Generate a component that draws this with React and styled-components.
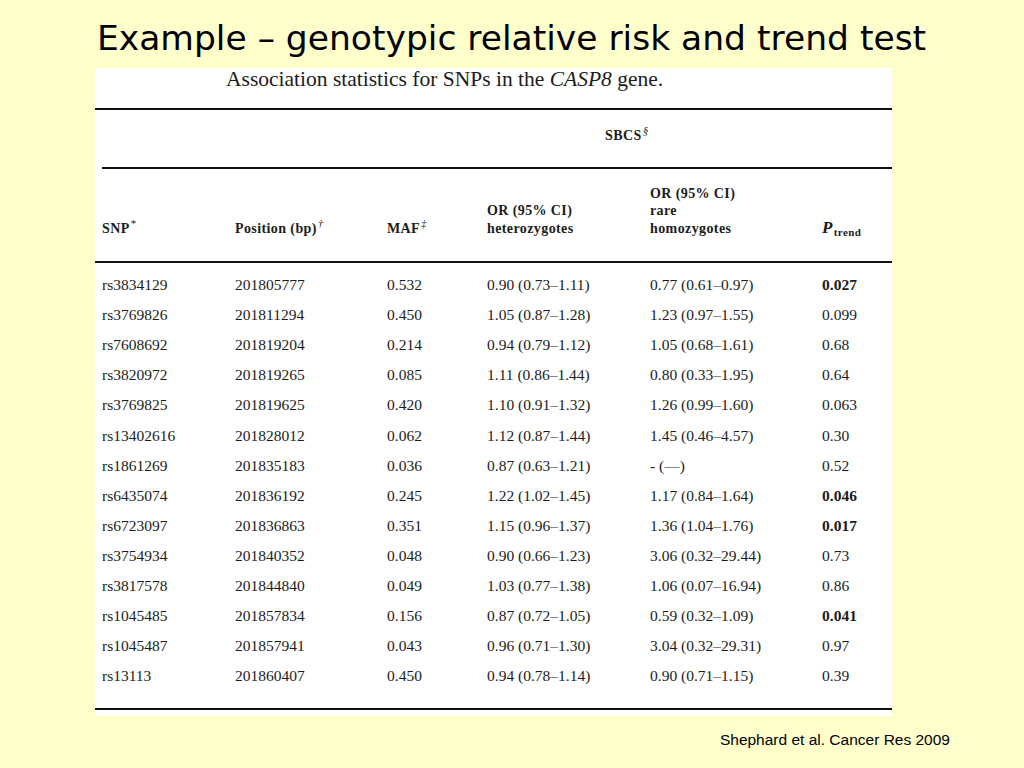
import React from "react";
import styled, { createGlobalStyle } from "styled-components";

const Global = createGlobalStyle`
  html, body { margin: 0; padding: 0; background: #ffffcc; }
  #root { width: 1024px; height: 768px; }
`;

const Page = styled.div`
  width: 1024px;
  height: 768px;
  background: #ffffcc;
  display: flex;
  flex-direction: column;
  box-sizing: border-box;
  padding-top: 16px;
`;

const Title = styled.h1`
  margin: 0 0 0 97px;
  height: 52px;
  font-family: "DejaVu Sans", Verdana, sans-serif;
  font-weight: normal;
  font-size: 34.5px;
  line-height: 44px;
  color: #000;
  white-space: nowrap;
`;

const Panel = styled.div`
  margin-left: 95px;
  width: 797px;
  height: 648px;
  background: #fff;
  display: flex;
  flex-direction: column;
  font-family: "Liberation Serif", "Times New Roman", serif;
  color: #1c1c1c;
`;

const Caption = styled.div`
  height: 40px;
  padding-left: 131px;
  font-size: 21.5px;
  line-height: 22px;
  box-sizing: border-box;
  i { font-style: italic; }
`;

const Rule = styled.div`
  height: 2px;
  background: #111;
  margin-left: ${(p) => p.$indent || 0}px;
`;

const GroupRow = styled.div`
  height: 57px;
  display: flex;
  align-items: center;
  padding-left: 510px;
  padding-bottom: 6px;
  box-sizing: border-box;
`;

const GroupLabel = styled.span`
  font-weight: bold;
  font-size: 14px;
  letter-spacing: 0.4px;
`;

const Sup = styled.sup`
  font-size: 11px;
  font-style: ${(p) => (p.$italic ? "italic" : "normal")};
  font-weight: normal;
  vertical-align: 6px;
  line-height: 0;
  margin-left: 1px;
`;

const Grid = styled.div`
  display: grid;
  grid-template-columns: 133px 152px 100px 163px 172px 1fr;
  padding-left: 7px;
`;

const HeadGrid = styled(Grid)`
  height: 92px;
  align-items: end;
  padding-bottom: 24px;
  box-sizing: border-box;
`;

const HeadCell = styled.div`
  font-weight: bold;
  font-size: 14px;
  line-height: 17.5px;
  letter-spacing: 0.4px;
  white-space: nowrap;
`;

const Body = styled.div`
  padding-top: 7px;
  height: 445px;
  box-sizing: border-box;
`;

const Row = styled(Grid)`
  height: 30.1px;
  align-items: center;
`;

const Cell = styled.div`
  font-size: 15.5px;
  line-height: 20px;
  white-space: nowrap;
  font-weight: ${(p) => (p.$bold ? "bold" : "normal")};
`;

const PItalic = styled.span`
  font-style: italic;
  font-size: 17px;
`;

const Sub = styled.sub`
  font-size: 11px;
  font-weight: bold;
  vertical-align: -3px;
  line-height: 0;
  margin-left: 1px;
`;

const Citation = styled.div`
  margin-top: 15px;
  align-self: flex-end;
  margin-right: 74px;
  font-family: "Liberation Sans", Arial, sans-serif;
  font-size: 15.5px;
  line-height: 18px;
  color: #000;
`;

const rows = [
  ["rs3834129", "201805777", "0.532", "0.90 (0.73–1.11)", "0.77 (0.61–0.97)", "0.027", true],
  ["rs3769826", "201811294", "0.450", "1.05 (0.87–1.28)", "1.23 (0.97–1.55)", "0.099"],
  ["rs7608692", "201819204", "0.214", "0.94 (0.79–1.12)", "1.05 (0.68–1.61)", "0.68"],
  ["rs3820972", "201819265", "0.085", "1.11 (0.86–1.44)", "0.80 (0.33–1.95)", "0.64"],
  ["rs3769825", "201819625", "0.420", "1.10 (0.91–1.32)", "1.26 (0.99–1.60)", "0.063"],
  ["rs13402616", "201828012", "0.062", "1.12 (0.87–1.44)", "1.45 (0.46–4.57)", "0.30"],
  ["rs1861269", "201835183", "0.036", "0.87 (0.63–1.21)", "- (—)", "0.52"],
  ["rs6435074", "201836192", "0.245", "1.22 (1.02–1.45)", "1.17 (0.84–1.64)", "0.046", true],
  ["rs6723097", "201836863", "0.351", "1.15 (0.96–1.37)", "1.36 (1.04–1.76)", "0.017", true],
  ["rs3754934", "201840352", "0.048", "0.90 (0.66–1.23)", "3.06 (0.32–29.44)", "0.73"],
  ["rs3817578", "201844840", "0.049", "1.03 (0.77–1.38)", "1.06 (0.07–16.94)", "0.86"],
  ["rs1045485", "201857834", "0.156", "0.87 (0.72–1.05)", "0.59 (0.32–1.09)", "0.041", true],
  ["rs1045487", "201857941", "0.043", "0.96 (0.71–1.30)", "3.04 (0.32–29.31)", "0.97"],
  ["rs13113", "201860407", "0.450", "0.94 (0.78–1.14)", "0.90 (0.71–1.15)", "0.39"],
];

export default function App() {
  return (
    <>
      <Global />
      <Page>
        <Title>Example – genotypic relative risk and trend test</Title>
        <Panel>
          <Caption>
            Association statistics for SNPs in the <i>CASP8</i> gene.
          </Caption>
          <Rule />
          <GroupRow>
            <GroupLabel>
              SBCS<Sup $italic>§</Sup>
            </GroupLabel>
          </GroupRow>
          <Rule $indent={7} />
          <HeadGrid>
            <HeadCell>
              SNP<Sup>*</Sup>
            </HeadCell>
            <HeadCell>
              Position (bp)<Sup $italic>†</Sup>
            </HeadCell>
            <HeadCell>
              MAF<Sup $italic>‡</Sup>
            </HeadCell>
            <HeadCell>
              OR (95% CI)
              <br />
              heterozygotes
            </HeadCell>
            <HeadCell>
              OR (95% CI)
              <br />
              rare
              <br />
              homozygotes
            </HeadCell>
            <HeadCell>
              <PItalic>P</PItalic>
              <Sub>trend</Sub>
            </HeadCell>
          </HeadGrid>
          <Rule />
          <Body>
            {rows.map((r) => (
              <Row key={r[0]}>
                <Cell>{r[0]}</Cell>
                <Cell>{r[1]}</Cell>
                <Cell>{r[2]}</Cell>
                <Cell>{r[3]}</Cell>
                <Cell>{r[4]}</Cell>
                <Cell $bold={r[6]}>{r[5]}</Cell>
              </Row>
            ))}
          </Body>
          <Rule />
        </Panel>
        <Citation>Shephard et al. Cancer Res 2009</Citation>
      </Page>
    </>
  );
}
